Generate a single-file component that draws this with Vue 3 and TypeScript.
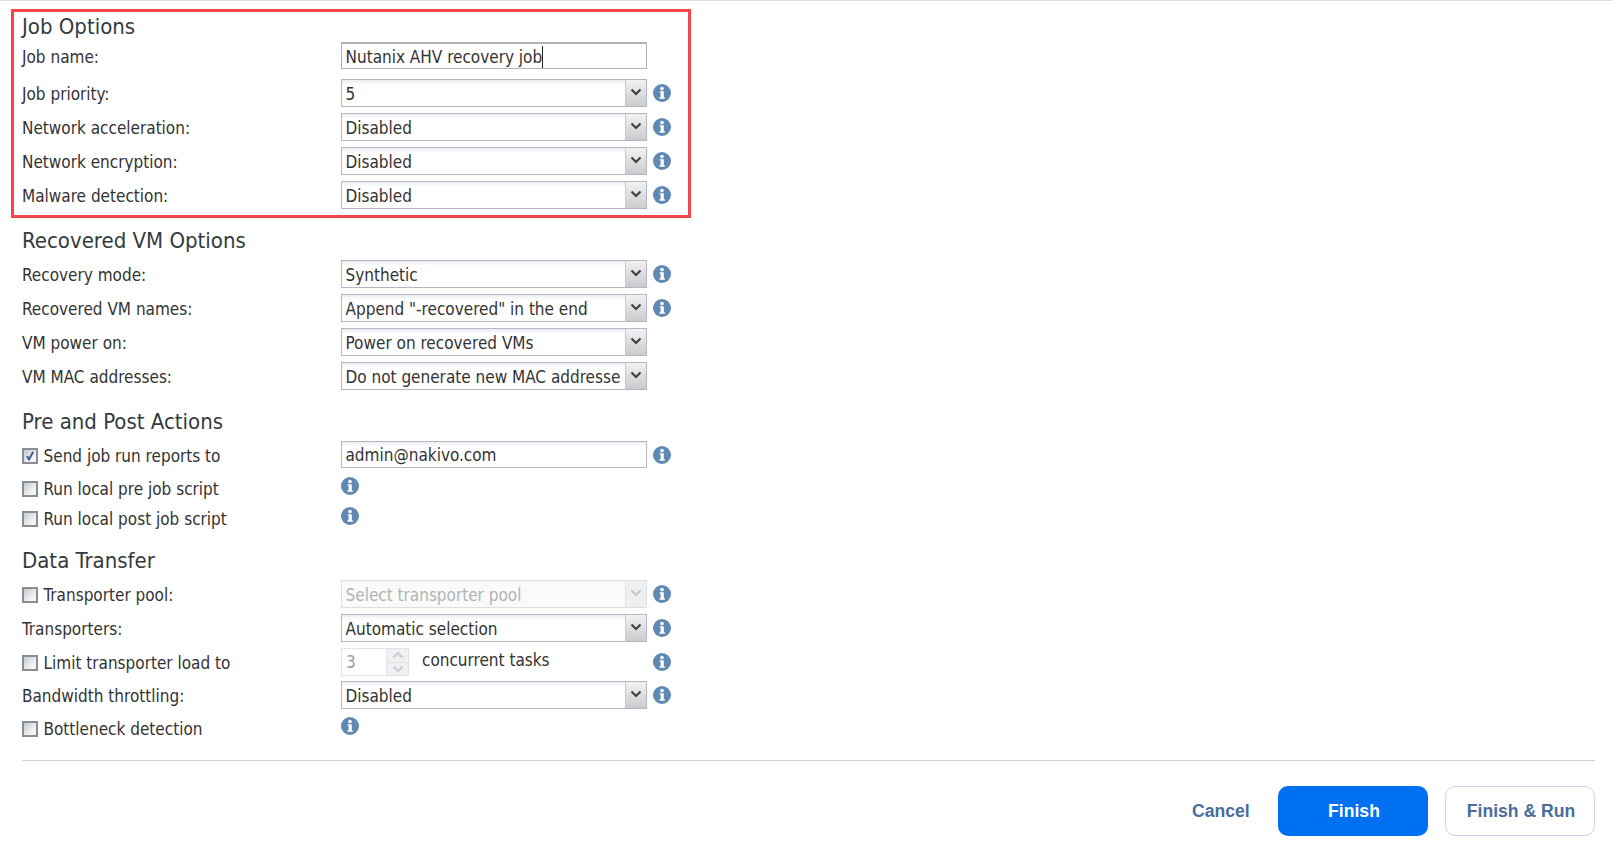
<script setup lang="ts">
type Kind = 'input' | 'select' | 'spinner' | 'none'
interface Row {
  label: string
  kind: Kind
  value?: string
  info?: boolean
  check?: boolean
  checked?: boolean
  disabled?: boolean
  focused?: boolean
  cls?: string
}
interface Section {
  title: string
  cls: string
  rows: Row[]
}
const sections: Section[] = [
  {
    title: 'Job Options',
    cls: 'boxed',
    rows: [
      { label: 'Job name:', kind: 'input', value: 'Nutanix AHV recovery job', focused: true, cls: 'first-row' },
      { label: 'Job priority:', kind: 'select', value: '5', info: true },
      { label: 'Network acceleration:', kind: 'select', value: 'Disabled', info: true },
      { label: 'Network encryption:', kind: 'select', value: 'Disabled', info: true },
      { label: 'Malware detection:', kind: 'select', value: 'Disabled', info: true },
    ],
  },
  {
    title: 'Recovered VM Options',
    cls: 'vm',
    rows: [
      { label: 'Recovery mode:', kind: 'select', value: 'Synthetic', info: true },
      { label: 'Recovered VM names:', kind: 'select', value: 'Append "-recovered" in the end', info: true },
      { label: 'VM power on:', kind: 'select', value: 'Power on recovered VMs' },
      { label: 'VM MAC addresses:', kind: 'select', value: 'Do not generate new MAC addresse' },
    ],
  },
  {
    title: 'Pre and Post Actions',
    cls: 'actions',
    rows: [
      { label: 'Send job run reports to', kind: 'input', value: 'admin@nakivo.com', info: true, check: true, checked: true },
      { label: 'Run local pre job script', kind: 'none', check: true, cls: 'script-row' },
      { label: 'Run local post job script', kind: 'none', check: true, cls: 'script-row' },
    ],
  },
  {
    title: 'Data Transfer',
    cls: 'transfer',
    rows: [
      { label: 'Transporter pool:', kind: 'select', value: 'Select transporter pool', info: true, check: true, disabled: true },
      { label: 'Transporters:', kind: 'select', value: 'Automatic selection', info: true },
      { label: 'Limit transporter load to', kind: 'spinner', value: '3', info: true, check: true },
      { label: 'Bandwidth throttling:', kind: 'select', value: 'Disabled', info: true },
      { label: 'Bottleneck detection', kind: 'none', check: true, cls: 'script-row' },
    ],
  },
]
</script>

<template>
  <div class="page">
    <svg class="defs" width="0" height="0" aria-hidden="true">
      <symbol id="info-i" viewBox="0 0 18 18">
        <circle cx="9" cy="9" r="9" fill="#5f88b3" />
        <circle cx="9" cy="4.6" r="1.8" fill="#fff" />
        <path d="M6.6 7.2h4.2v6.1h1v1.5H6.5v-1.5h1.1V8.6h-1z" fill="#fff" />
      </symbol>
    </svg>

    <section v-for="s in sections" :key="s.title" class="section" :class="s.cls">
      <h2 class="title">{{ s.title }}</h2>
      <div v-for="r in s.rows" :key="r.label" class="row" :class="r.cls">
        <div class="label">
          <span v-if="r.check" class="check">
            <svg v-if="r.checked" viewBox="0 0 12 12" width="12" height="12">
              <path d="M3 6.2l2 3.2L9.2 1.8" fill="none" stroke="#3a5aa8" stroke-width="2" />
            </svg>
          </span>
          <span>{{ r.label }}</span>
        </div>

        <div class="field">
          <div v-if="r.kind === 'input'" class="box input">
            <span class="text">{{ r.value }}</span><span v-if="r.focused" class="caret"></span>
          </div>
          <div v-else-if="r.kind === 'select'" class="box select" :class="{ disabled: r.disabled }">
            <span class="text clip">{{ r.value }}</span>
            <span class="arrow">
              <svg viewBox="0 0 12 8" width="12" height="8">
                <path d="M1.5 1.5L6 6l4.5-4.5" fill="none" :stroke="r.disabled ? '#c4c8cc' : '#3c4146'" stroke-width="2.2" />
              </svg>
            </span>
          </div>
          <div v-else-if="r.kind === 'spinner'" class="spinner-line">
            <div class="box spinner">
              <span class="text">{{ r.value }}</span>
              <span class="spin-btns">
                <span class="spin-btn">
                  <svg viewBox="0 0 12 8" width="12" height="8"><path d="M1.5 6.5L6 2l4.5 4.5" fill="none" stroke="#c6ced8" stroke-width="2.2" /></svg>
                </span>
                <span class="spin-btn">
                  <svg viewBox="0 0 12 8" width="12" height="8"><path d="M1.5 1.5L6 6l4.5-4.5" fill="none" stroke="#c6ced8" stroke-width="2.2" /></svg>
                </span>
              </span>
            </div>
            <span class="suffix">concurrent tasks</span>
          </div>
          <svg v-else class="info raised" viewBox="0 0 18 18"><use href="#info-i" /></svg>
        </div>

        <div class="after">
          <svg v-if="r.info" class="info" viewBox="0 0 18 18"><use href="#info-i" /></svg>
        </div>
      </div>
    </section>

    <div class="footer">
      <button class="btn link" type="button">Cancel</button>
      <button class="btn primary" type="button">Finish</button>
      <button class="btn outline" type="button">Finish &amp; Run</button>
    </div>
  </div>
</template>

<style>
html, body { background: #fff; }
</style>

<style scoped>
.page {
  width: 1613px;
  height: 855px;
  box-sizing: border-box;
  border-top: 1px solid #dcdcdc;
  padding: 8px 18px 0 22px;
  font-family: "DejaVu Sans Condensed", "DejaVu Sans", sans-serif;
  font-stretch: condensed;
  color: #333;
  overflow: hidden;
  position: relative;
}
.defs { position: absolute; }
.section { width: 669px; }
.title {
  margin: 0;
  font-size: 22px;
  font-weight: 400;
  line-height: 24px;
  height: 24px;
  color: #333b40;
}
.boxed {
  box-sizing: border-box;
  width: 680px;
  margin-left: -11px;
  border: 3px solid #f3474b;
  padding: 3px 0 6px 8px;
}
.vm { margin-top: 11px; }
.vm .title { margin-bottom: 7px; }
.actions { margin-top: 20px; }
.actions .title { margin-bottom: 7px; }
.transfer { margin-top: 17px; }
.transfer .title { margin-bottom: 7px; }

.row {
  display: grid;
  grid-template-columns: 319px 306px 6px 18px;
  height: 28px;
  margin-bottom: 6px;
  align-items: center;
}
.first-row { height: 27px; margin-top: 3px; margin-bottom: 10px; }
.boxed .row:last-child { margin-bottom: 0; }
.script-row { margin-bottom: 2px; }
.actions .row:first-of-type { height: 27px; margin-bottom: 6px; }
.actions .row:nth-of-type(2) { margin-bottom: 2px; }
.actions .row:last-child { margin-bottom: 4px; }
.transfer .row:nth-of-type(3) { margin-bottom: 5px; }
.transfer .row:nth-of-type(4) { margin-bottom: 5px; }
.label {
  display: flex;
  align-items: center;
  gap: 5.5px;
  font-size: 17px;
  line-height: 20px;
  position: relative;
  top: 1px;
}
.check {
  box-sizing: border-box;
  width: 16px;
  height: 16px;
  border: 2px solid #8a8d92;
  background: linear-gradient(135deg, #c4c8d0, #f4f4f6 72%);
  display: flex;
  align-items: center;
  justify-content: center;
}
.field { grid-column: 2; min-width: 0; display: flex; align-items: center; }
.after { grid-column: 4; display: flex; align-items: center; }
.info { width: 18px; height: 18px; display: block; }
.raised { position: relative; top: -2px; }
.box {
  box-sizing: border-box;
  width: 306px;
  height: 28px;
  border: 1px solid #b4b6c8;
  background: linear-gradient(#e9ecef, #fff 5px);
  display: flex;
  align-items: center;
  font-size: 17px;
  color: #333;
}
.input { height: 27px; padding: 1px 0 0 3.5px; background: #fff; border-top-width: 2px; border-color: #b0b2b8; }
.actions .input { background: linear-gradient(#e9ecef, #fff 5px); border-top-width: 1px; border-color: #b4b6c8; padding-top: 0; }
.text { white-space: nowrap; }
.caret { display: inline-block; width: 1px; height: 22px; background: #222; }
.select .text { padding: 1px 0 0 3.5px; }
.clip { flex: 1; min-width: 0; overflow: hidden; }
.arrow {
  flex: none;
  width: 21px;
  height: 100%;
  border-left: 1px solid #c8cad2;
  background: linear-gradient(#f2f2f3, #c9cbcd);
  display: flex;
  align-items: center;
  justify-content: center;
  padding: 0 1px 3px 0;
  box-sizing: border-box;
}
.disabled {
  border-color: #dcdee2;
  background: #fafafa;
  color: #b0b3b6;
}
.disabled .arrow { background: #eeeff0; border-left-color: #e2e3e6; }
.spinner-line { display: flex; align-items: center; gap: 13px; }
.spinner {
  width: 68px;
  border: 1px solid #e1e2e6;
  background: #fff;
  color: #9a9da0;
}
.spinner .text { flex: 1; padding-left: 4px; }
.spin-btns {
  flex: none;
  width: 22px;
  height: 100%;
  display: flex;
  flex-direction: column;
  background: #eff0f2;
  border-left: 1px solid #e1e2e6;
  box-sizing: border-box;
}
.spin-btn {
  flex: 1;
  display: flex;
  align-items: center;
  justify-content: center;
}
.spin-btn + .spin-btn { border-top: 1px solid #e1e2e6; }
.suffix { font-size: 17px; position: relative; top: -2px; }

.footer {
  position: absolute;
  left: 22px;
  top: 759px;
  width: 1573px;
  box-sizing: border-box;
  border-top: 1px solid #cfd0d2;
  padding-top: 25px;
  display: flex;
  justify-content: flex-end;
  gap: 17px;
}
.btn {
  box-sizing: border-box;
  width: 150px;
  height: 50px;
  border-radius: 10px;
  font-family: "Liberation Sans", Arial, sans-serif;
  font-stretch: normal;
  font-size: 17.6px;
  font-weight: 700;
  background: #fff;
  border: 1px solid transparent;
  padding: 0 0 0 2px;
}
.link { width: 57px; margin-right: 13px; padding: 0; color: #4a6d9c; white-space: nowrap; }
.primary { background: #0070f3; color: #fff; }
.outline { border-color: #c6d5e8; color: #4a6d9c; }
</style>
